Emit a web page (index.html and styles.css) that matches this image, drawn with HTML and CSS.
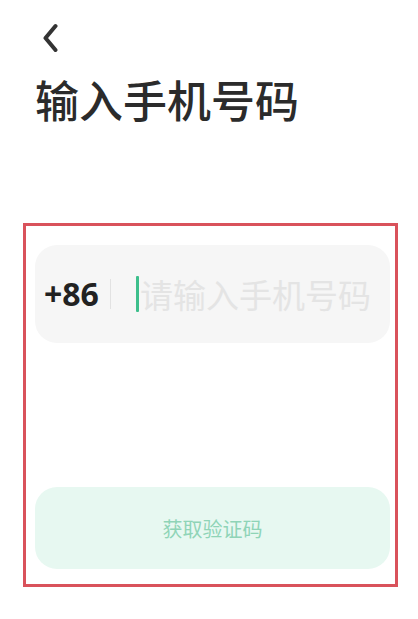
FILE: index.html
```html
<!DOCTYPE html>
<html lang="zh-CN">
<head>
<meta charset="utf-8">
<link rel="stylesheet" href="styles.css">
</head>
<body>
<div class="page">
  <div class="nav">
    <svg class="back" width="16" height="32" viewBox="0 0 16 32">
      <path d="M13.5 4 L3.5 16 L13.5 28" fill="none" stroke="#333" stroke-width="4" stroke-linecap="round" stroke-linejoin="round"/>
    </svg>
  </div>
  <h1 class="title">输入手机号码</h1>
  <div class="frame">
    <div class="phone">
      <span class="code">+86</span>
      <span class="divider"></span>
      <span class="cursor"></span>
      <span class="placeholder">请输入手机号码</span>
    </div>
    <div class="btn">获取验证码</div>
  </div>
</div>
</body>
</html>
```
FILE: styles.css
```css
html, body {
  margin: 0;
  padding: 0;
  background: #fff;
}
body {
  font-family: "Noto Sans CJK SC", "Noto Sans", sans-serif;
  width: 418px;
  height: 619px;
  overflow: hidden;
}
.page {
  display: flex;
  flex-direction: column;
}
.nav {
  padding: 22px 0 0 42px;
  height: 33px;
}
.back {
  display: block;
}
.title {
  margin: 20px 0 0 35px;
  font-size: 44px;
  line-height: 48px;
  font-weight: 500;
  color: #2b2b2b;
  letter-spacing: 0;
}
.frame {
  margin: 100px 0 0 23px;
  width: 369px;
  height: 358px;
  border: 3px solid #d9525b;
  padding: 0;
  display: flex;
  flex-direction: column;
}
.phone {
  margin: 19px 5px 0 9px;
  height: 98px;
  border-radius: 22px;
  background: #f6f6f6;
  display: flex;
  align-items: center;
  padding-left: 9px;
}
.code {
  font-family: "Noto Sans", "Liberation Sans", sans-serif;
  font-weight: 700;
  font-size: 32px;
  color: #222;
  line-height: 1;
}
.divider {
  width: 1px;
  height: 30px;
  background: #e2e2e2;
  margin-left: 11px;
}
.cursor {
  width: 3px;
  height: 36px;
  background: #3dbf8c;
  border-radius: 1px;
  margin-left: 25px;
}
.placeholder {
  font-size: 33px;
  color: #e4e4e4;
  margin-left: 1px;
  line-height: 1;
}
.btn {
  margin: 144px 5px 0 9px;
  height: 82px;
  border-radius: 22px;
  background: #e7f8f1;
  color: #8fd4b7;
  font-size: 20px;
  display: flex;
  align-items: center;
  justify-content: center;
}
```
